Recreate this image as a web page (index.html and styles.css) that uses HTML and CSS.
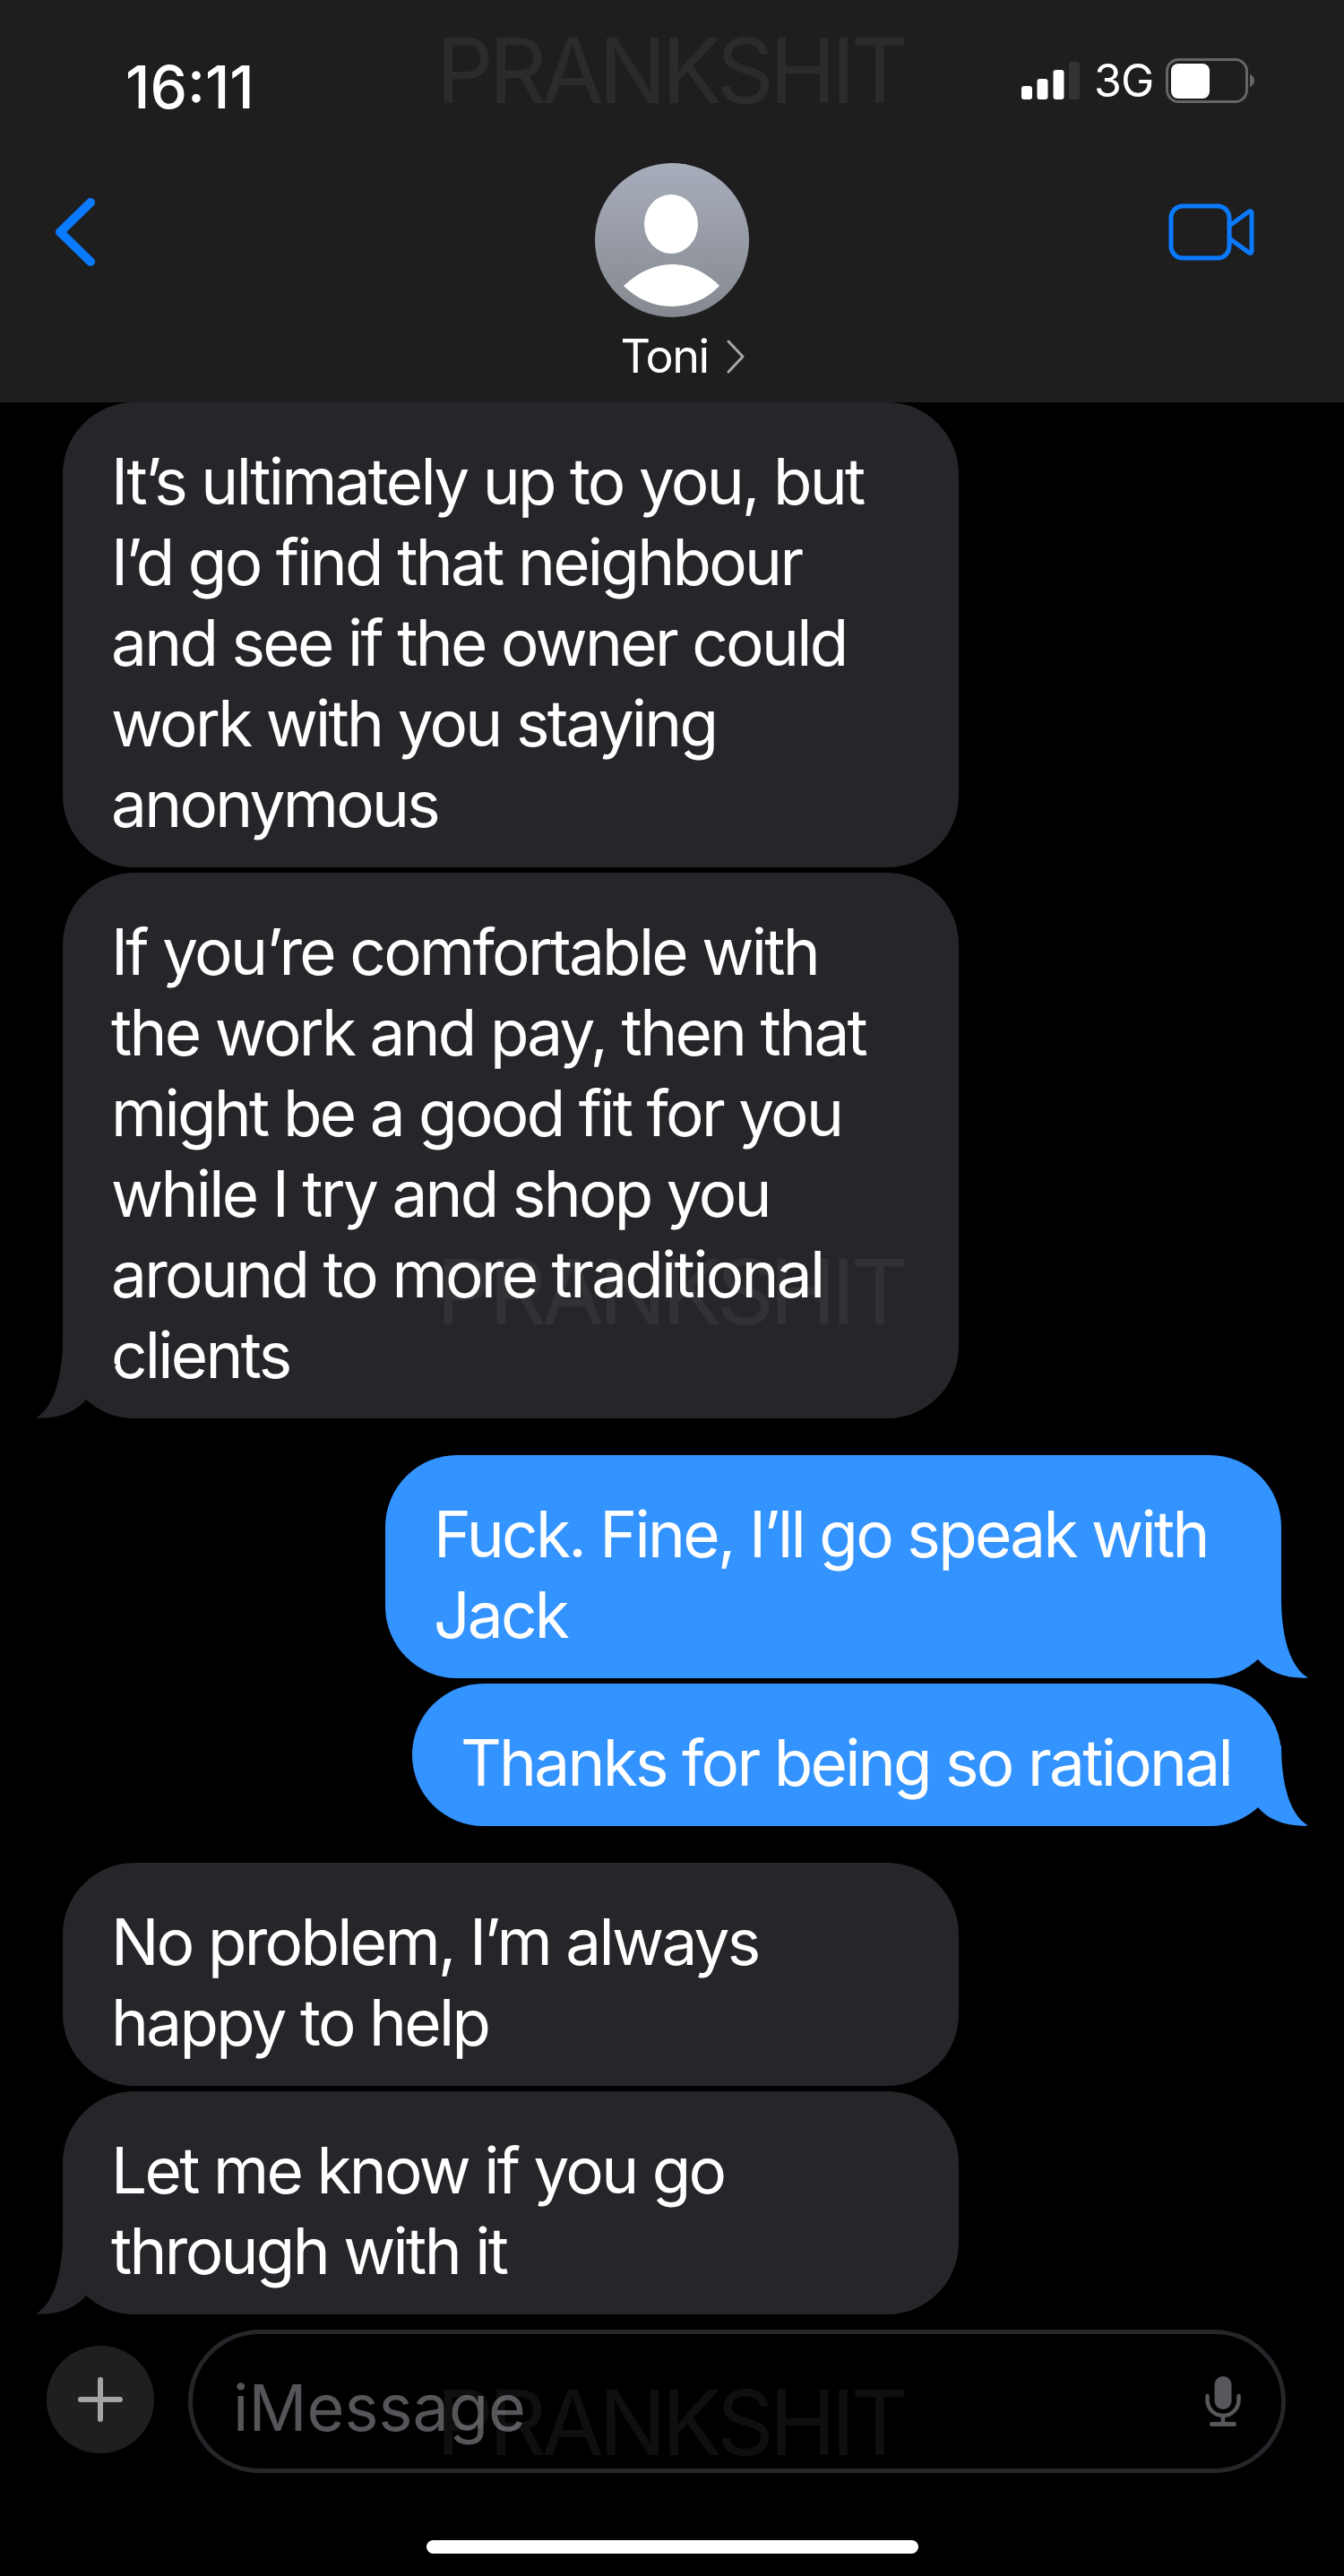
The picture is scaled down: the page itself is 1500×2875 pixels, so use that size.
FILE: index.html
```html
<!DOCTYPE html>
<html lang="en">
<head>
  <meta charset="UTF-8">
  <title>Toni</title>
  <link rel="stylesheet" href="styles.css">
</head>
<body>

  <div class="header">
    <div class="statusbar">
      <span class="time">16:11</span>
      <div class="status-icons">
        <svg class="signal" width="65" height="42" viewBox="0 0 65 42">
          <rect x="0" y="27" width="12" height="15" rx="3" fill="#fff"/>
          <rect x="17.5" y="19" width="12" height="23" rx="3" fill="#fff"/>
          <rect x="35.5" y="9" width="12" height="33" rx="3" fill="#fff"/>
          <rect x="53" y="0" width="12" height="42" rx="3" fill="#333"/>
        </svg>
        <span class="network">3G</span>
        <svg class="battery" width="99" height="50" viewBox="0 0 99 50">
          <rect x="1.5" y="1.5" width="89" height="47" rx="13" fill="none" stroke="#666" stroke-width="3"/>
          <rect x="6" y="6" width="43" height="39" rx="8" fill="#fff"/>
          <path d="M94 18 C97 19 99 22 99 25 C99 28 97 31 94 32 Z" fill="#666"/>
        </svg>
      </div>
    </div>
    <div class="navrow">
      <svg class="back" width="48" height="78" viewBox="0 0 48 78">
        <path d="M41 6 L7 39 L41 72" fill="none" stroke="#0a7aff" stroke-width="10" stroke-linecap="round" stroke-linejoin="round"/>
      </svg>
      <div class="contact">
        <svg class="avatar" width="172" height="172" viewBox="0 0 172 172">
          <defs>
            <linearGradient id="avatar-bg" x1="0" y1="0" x2="0" y2="1">
              <stop offset="0" stop-color="#a7adbb"/>
              <stop offset="1" stop-color="#85898f"/>
            </linearGradient>
          </defs>
          <circle cx="86" cy="86" r="86" fill="url(#avatar-bg)"/>
          <ellipse cx="85" cy="68" rx="30" ry="33" fill="#fff"/>
          <path d="M32 137 C48 122 66 113 86 113 C106 113 124 122 139 137 C126 151 106 160 86 160 C65 160 46 151 32 137 Z" fill="#fff"/>
        </svg>
        <div class="contact-name">Toni
          <svg width="22" height="38" viewBox="0 0 22 38">
            <path d="M3 2 L19 19 L3 36" fill="none" stroke="#a8a8a8" stroke-width="3" stroke-linecap="round" stroke-linejoin="round"/>
          </svg>
        </div>
      </div>
      <svg class="video" width="96" height="64" viewBox="0 0 96 64">
        <rect x="3" y="3" width="65" height="58" rx="13" fill="none" stroke="#0a7aff" stroke-width="5"/>
        <path d="M68 25 L90 9 C92 8 93 9 93 11 L93 53 C93 55 92 56 90 55 L68 39" fill="none" stroke="#0a7aff" stroke-width="5" stroke-linejoin="round"/>
      </svg>
    </div>
  </div>

  <div class="messages">
    <div class="bubble received">It’s ultimately up to you, but<br>I’d go find that neighbour<br>and see if the owner could<br>work with you staying<br>anonymous</div>
    <div class="bubble received last">If you’re comfortable with<br>the work and pay, then that<br>might be a good fit for you<br>while I try and shop you<br>around to more traditional<br>clients
      <svg class="tail" width="90" height="90" viewBox="0 0 90 90"><path d="M30 0 C30 44 20 78 0 89.5 C22 91 44 84 56 69 L90 30 Z"/></svg>
    </div>

    <div class="bubble sent wide block-start last">Fuck. Fine, I’ll go speak with<br>Jack
      <svg class="tail" width="90" height="90" viewBox="0 0 90 90"><path d="M30 0 C30 44 20 78 0 89.5 C22 91 44 84 56 69 L90 30 Z"/></svg>
    </div>
    <div class="bubble sent last">Thanks for being so rational
      <svg class="tail" width="90" height="90" viewBox="0 0 90 90"><path d="M30 0 C30 44 20 78 0 89.5 C22 91 44 84 56 69 L90 30 Z"/></svg>
    </div>

    <div class="bubble received block-start">No problem, I’m always<br>happy to help</div>
    <div class="bubble received last">Let me know if you go<br>through with it
      <svg class="tail" width="90" height="90" viewBox="0 0 90 90"><path d="M30 0 C30 44 20 78 0 89.5 C22 91 44 84 56 69 L90 30 Z"/></svg>
    </div>
  </div>

  <div class="composer">
    <div class="plus-btn">
      <svg width="50" height="50" viewBox="0 0 50 50">
        <path d="M25 3 V47 M3 25 H47" stroke="#a5a5a7" stroke-width="6" stroke-linecap="round"/>
      </svg>
    </div>
    <div class="input-box">
      <span class="placeholder">iMessage</span>
      <svg class="mic" width="40" height="56" viewBox="0 0 40 56">
        <rect x="10.5" y="0" width="19" height="37" rx="9.5" fill="#58585c"/>
        <path d="M2.5 22 V26 C2.5 36 10 44 20 44 C30 44 37.5 36 37.5 26 V22" fill="none" stroke="#58585c" stroke-width="4.5" stroke-linecap="round"/>
        <path d="M20 44 V53" stroke="#58585c" stroke-width="4.5"/>
        <rect x="5" y="51" width="30" height="5" rx="2.5" fill="#58585c"/>
      </svg>
    </div>
  </div>

  <div class="home-indicator"></div>

  <div class="watermark wm-top">PRANKSHIT</div>
  <div class="watermark wm-middle">PRANKSHIT</div>
  <div class="watermark wm-bottom">PRANKSHIT</div>

</body>
</html>
```

FILE: styles.css
```css
html, body {
  margin: 0;
  padding: 0;
}

body {
  position: relative;
  width: 1500px;
  height: 2875px;
  overflow: hidden;
  background-color: #000;
  color: #fff;
  font-family: Inter, "Liberation Sans", sans-serif;
}

.header {
  background-color: #1e1e1e;
  height: 449px;
  box-sizing: border-box;
}

.statusbar {
  display: flex;
  justify-content: space-between;
  align-items: center;
  height: 130px;
  padding: 60px 100px 0 140px;
  box-sizing: border-box;
}

.time {
  font-size: 66px;
  font-weight: 500;
  margin-top: 4px;
}

.status-icons {
  display: flex;
  align-items: center;
  margin-top: -10px;
}

.network {
  width: 64px;
  margin: 0 16px;
  font-size: 50px;
  letter-spacing: -1px;
}

.navrow {
  display: grid;
  grid-template-columns: 1fr 172px 1fr;
  align-items: start;
  padding: 52px 100px 0;
}

.back {
  margin: 38px 0 0 -40px;
}

.video {
  margin-top: 45px;
  justify-self: end;
}

.contact {
  display: flex;
  flex-direction: column;
  align-items: center;
}

.avatar {
  display: block;
}

.contact-name {
  display: flex;
  align-items: center;
  gap: 19px;
  font-size: 52px;
  line-height: 60px;
  letter-spacing: -1.5px;
  margin-top: 14px;
  margin-left: 24px;
}

.messages {
  display: flex;
  flex-direction: column;
  gap: 6px;
}

.bubble {
  position: relative;
  box-sizing: border-box;
  padding: 43px 56px 26px 54px;
  border-radius: 80px;
  font-size: 71px;
  line-height: 90px;
  letter-spacing: -2.7px;
  white-space: nowrap;
}

.received {
  background-color: #26262a;
  width: 1000px;
  margin-left: 70px;
}

.sent {
  background-color: #3393ff;
  align-self: flex-end;
  margin-right: 70px;
}

.sent.wide {
  width: 1000px;
}

.block-start {
  margin-top: 35px;
}

.tail {
  position: absolute;
  left: -30px;
  bottom: 0;
  fill: #26262a;
}

.sent .tail {
  left: auto;
  right: -30px;
  fill: #3393ff;
  transform: scaleX(-1);
}

.composer {
  display: flex;
  align-items: center;
  gap: 38px;
  margin: 17px 65px 0 52px;
}

.plus-btn {
  flex: none;
  width: 120px;
  height: 120px;
  margin-top: -4px;
  border-radius: 50%;
  background-color: #1f1f21;
  display: flex;
  align-items: center;
  justify-content: center;
}

.input-box {
  flex: 1;
  height: 160px;
  box-sizing: border-box;
  border: 5px solid #26262a;
  border-radius: 80px;
  display: flex;
  align-items: center;
  justify-content: space-between;
  padding: 0 45px;
}

.placeholder {
  font-size: 72px;
  margin-top: 12px;
  color: #56565a;
}

.home-indicator {
  position: absolute;
  left: 476px;
  top: 2835px;
  width: 549px;
  height: 15px;
  border-radius: 8px;
  background-color: #fff;
}

.watermark {
  position: absolute;
  left: 487px;
  font-size: 100px;
  line-height: 100px;
  letter-spacing: -5.2px;
  color: rgba(255, 255, 255, 0.06);
  pointer-events: none;
}

.wm-top {
  top: 29px;
}

.wm-middle {
  top: 1392px;
}

.wm-bottom {
  top: 2654px;
}
```
